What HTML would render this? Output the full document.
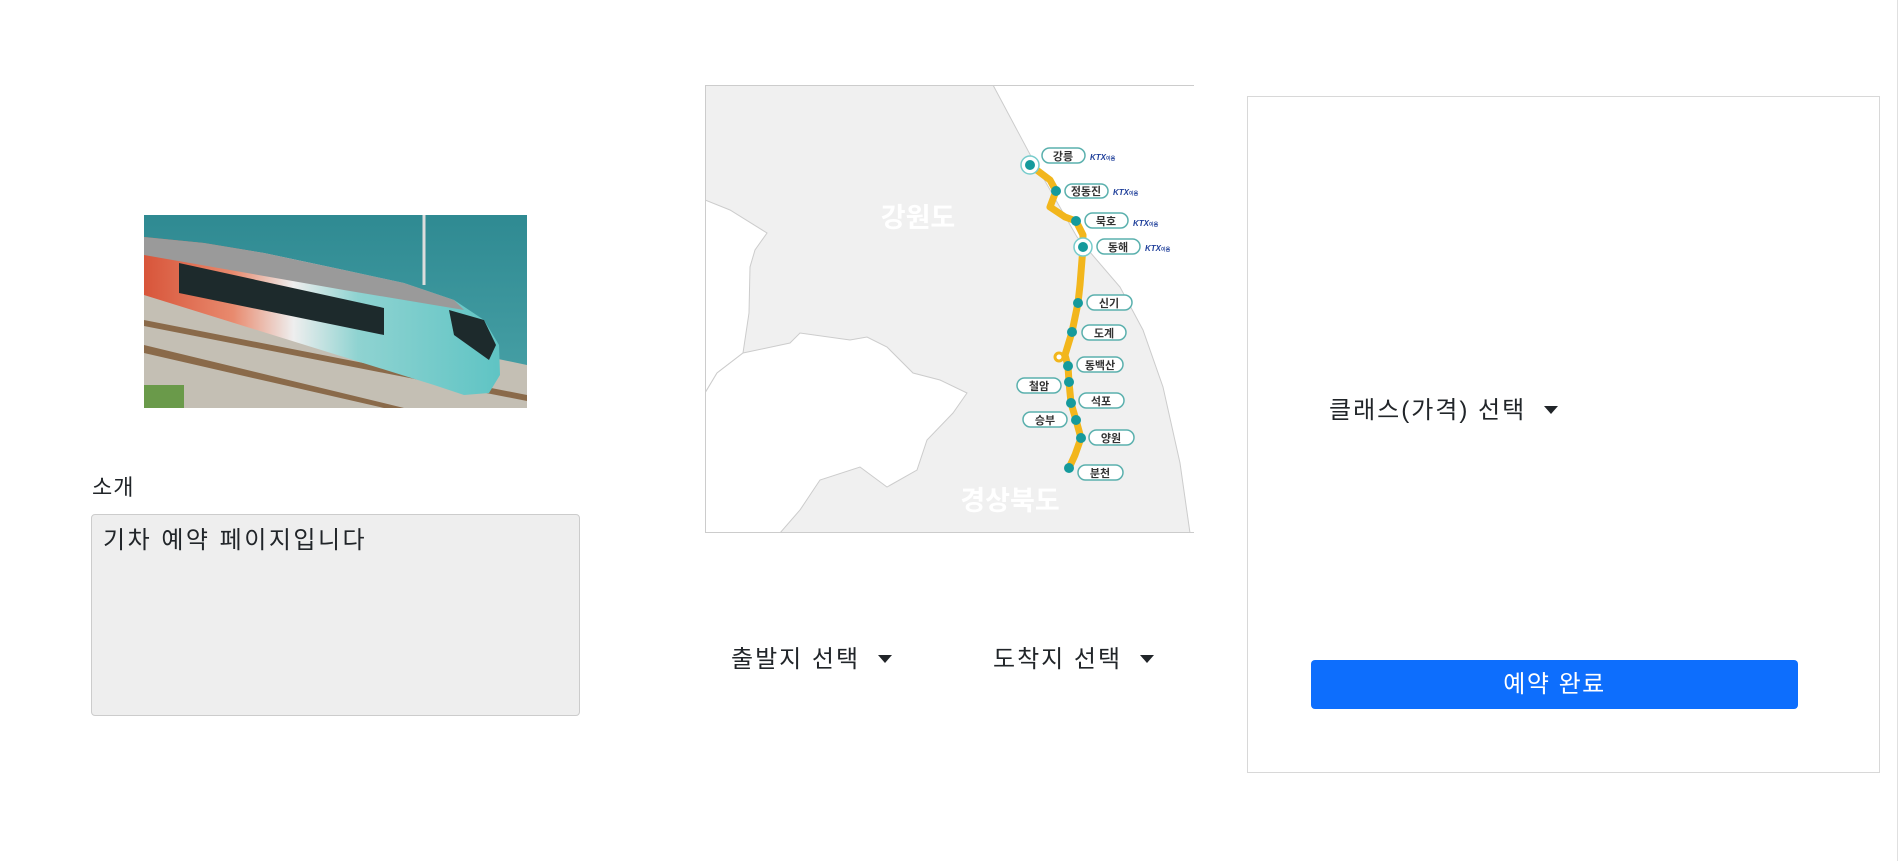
<!DOCTYPE html>
<html><head><meta charset="utf-8">
<style>
body{margin:0;width:1900px;height:861px;background:#fff;position:relative;overflow:hidden;font-family:"Liberation Sans","Noto Sans CJK KR","NanumGothic",sans-serif;color:#212529}
.a{position:absolute}
.dd{font-size:24px;line-height:30px;white-space:nowrap;letter-spacing:2px}
.dd::after{content:"";display:inline-block;margin-left:18px;vertical-align:4px;border-top:8px solid #212529;border-left:7px solid transparent;border-right:7px solid transparent}
</style></head><body>
<div class="a" style="left:1897px;top:0;width:1px;height:861px;background:#e0e0e0"></div>

<svg class="a" style="left:144px;top:215px" width="383" height="193" viewBox="0 0 383 193">
<defs>
<linearGradient id="sea" x1="0" y1="0" x2="0" y2="1"><stop offset="0" stop-color="#2f8a92"/><stop offset="1" stop-color="#4aa3a8"/></linearGradient>
<linearGradient id="body" x1="0" y1="0" x2="1" y2="0"><stop offset="0" stop-color="#d8553a"/><stop offset="0.25" stop-color="#e88a6e"/><stop offset="0.42" stop-color="#eeeeee"/><stop offset="0.6" stop-color="#8fd3d1"/><stop offset="1" stop-color="#5fc4c4"/></linearGradient>
</defs>
<rect width="383" height="193" fill="url(#sea)"/>
<polygon points="0,70 383,150 383,193 0,193" fill="#c4bfb4"/>
<polygon points="0,105 383,180 383,186 0,111" fill="#8a6a4a"/>
<polygon points="0,130 260,193 240,193 0,138" fill="#8a6a4a"/>
<rect x="0" y="170" width="40" height="23" fill="#6a9a4a"/>
<line x1="280" y1="0" x2="280" y2="70" stroke="#ddd" stroke-width="3"/>
<polygon points="0,22 60,28 120,38 200,55 260,68 310,85 340,105 355,130 356,160 345,178 320,180 290,170 0,80" fill="url(#body)"/>
<polygon points="0,22 60,28 120,38 200,55 260,68 310,85 320,95 200,75 0,40" fill="#9a9a9a"/>
<polygon points="35,48 240,93 240,120 35,78" fill="#1d2a2c"/>
<polygon points="305,95 340,105 352,130 345,145 310,120" fill="#1d2a2c"/>
</svg>

<div class="a" style="left:92px;top:474px;font-size:22px;line-height:28px;letter-spacing:1px">소개</div>
<div class="a" style="left:91px;top:514px;width:487px;height:200px;background:#eee;border:1px solid #ccc;border-radius:4px"></div>
<div class="a" style="left:103px;top:526px;font-size:24px;line-height:30px;letter-spacing:2.5px">기차 예약 페이지입니다</div>

<svg class="a" style="left:705px;top:85px" width="489" height="448" viewBox="0 0 489 448">
<rect width="489" height="448" fill="#fff"/>
<polygon points="0,0 288,0 328,75 372,152 415,202 438,245 458,302 475,378 485,448 0,448" fill="#f0f0f0"/>
<polygon points="0,115 25,125 62,148 50,165 45,182 44,228 38,268 12,288 0,308" fill="#fff" stroke="#ccc"/>
<polygon points="0,308 12,288 38,268 85,258 95,248 145,255 162,252 182,262 208,288 235,295 262,308 248,328 222,355 212,385 182,402 155,382 115,395 95,425 75,448 0,448" fill="#fff" stroke="#ccc"/>
<polyline points="0,0 288,0 328,75 372,152 415,202 438,245 458,302 475,378 485,448" fill="none" stroke="#ccc"/>
<line x1="0" y1="0.5" x2="489" y2="0.5" stroke="#ccc"/>
<line x1="0.5" y1="0" x2="0.5" y2="448" stroke="#ccc"/>
<line x1="0" y1="447.5" x2="489" y2="447.5" stroke="#ccc"/>
<text x="213" y="142" font-size="27" fill="#fff" text-anchor="middle" font-weight="bold" font-family="Noto Sans CJK KR,sans-serif">강원도</text>
<text x="305" y="425" font-size="27" fill="#fff" text-anchor="middle" font-weight="bold" font-family="Noto Sans CJK KR,sans-serif">경상북도</text>
<polyline points="325,80 345,95 351,106 345,122 360,132 371,136 378,150 378,162 375,200 373,218 367,247 360,270 363,281 364,297 366,318 371,335 376,353 370,370 364,383" fill="none" stroke="#f2b61c" stroke-width="7" stroke-linejoin="round" stroke-linecap="round"/>
<circle cx="354" cy="272" r="4" fill="#fff" stroke="#f2b61c" stroke-width="3"/>
<g fill="#fff" stroke="#5ab0ad" stroke-width="1.5">
<rect x="337" y="63" width="43" height="15" rx="7.5"/>
<rect x="360" y="99" width="43" height="14" rx="7"/>
<rect x="380" y="128" width="43" height="15" rx="7.5"/>
<rect x="392" y="154" width="43" height="15" rx="7.5"/>
<rect x="382" y="210" width="45" height="15" rx="7.5"/>
<rect x="377" y="240" width="44" height="15" rx="7.5"/>
<rect x="372" y="272" width="46" height="15" rx="7.5"/>
<rect x="312" y="293" width="44" height="15" rx="7.5"/>
<rect x="374" y="308" width="45" height="15" rx="7.5"/>
<rect x="318" y="327" width="44" height="15" rx="7.5"/>
<rect x="384" y="345" width="45" height="15" rx="7.5"/>
<rect x="373" y="380" width="45" height="15" rx="7.5"/>
</g>
<g font-size="11" fill="#333" text-anchor="middle" font-family="Noto Sans CJK KR,sans-serif" font-weight="bold">
<text x="358" y="75">강릉</text><text x="381" y="110">정동진</text><text x="401" y="140">묵호</text><text x="413" y="166">동해</text>
<text x="404" y="222">신기</text><text x="399" y="252">도계</text><text x="395" y="284">동백산</text><text x="334" y="305">철암</text>
<text x="396" y="320">석포</text><text x="340" y="339">승부</text><text x="406" y="357">양원</text><text x="395" y="392">분천</text>
</g>
<g font-size="8" fill="#1f3f9a" font-weight="bold" font-style="italic" font-family="Liberation Sans,sans-serif">
<text x="385" y="75">KTX<tspan font-size="5" font-style="normal">이음</tspan></text>
<text x="408" y="110">KTX<tspan font-size="5" font-style="normal">이음</tspan></text>
<text x="428" y="141">KTX<tspan font-size="5" font-style="normal">이음</tspan></text>
<text x="440" y="166">KTX<tspan font-size="5" font-style="normal">이음</tspan></text>
</g>
<g fill="#159a9c">
<circle cx="325" cy="80" r="9" fill="#fff" stroke="#7cc" stroke-width="1.5"/><circle cx="325" cy="80" r="5"/>
<circle cx="378" cy="162" r="9" fill="#fff" stroke="#7cc" stroke-width="1.5"/><circle cx="378" cy="162" r="5"/>
<circle cx="351" cy="106" r="5"/><circle cx="371" cy="136" r="5"/><circle cx="373" cy="218" r="5"/><circle cx="367" cy="247" r="5"/>
<circle cx="363" cy="281" r="5"/><circle cx="364" cy="297" r="5"/><circle cx="366" cy="318" r="5"/><circle cx="371" cy="335" r="5"/>
<circle cx="376" cy="353" r="5"/><circle cx="364" cy="383" r="5"/>
</g>
</svg>

<div class="a dd" style="left:731px;top:645px">출발지 선택</div>
<div class="a dd" style="left:993px;top:645px">도착지 선택</div>

<div class="a" style="left:1247px;top:96px;width:631px;height:675px;border:1px solid #d8d8d8"></div>
<div class="a dd" style="left:1329px;top:396px">클래스(가격) 선택</div>
<div class="a" style="left:1311px;top:660px;width:487px;height:49px;background:#0d6efd;border-radius:4px;color:#fff;font-size:24px;line-height:49px;text-align:center;letter-spacing:1.5px">예약 완료</div>
</body></html>
